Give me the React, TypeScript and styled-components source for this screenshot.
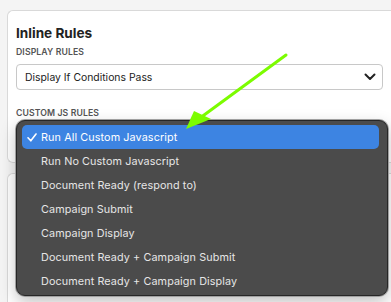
import React from "react";
import styled, { createGlobalStyle } from "styled-components";

const Global = createGlobalStyle`
  html, body { margin: 0; padding: 0; }
  body {
    background: #f4f4f4;
    font-family: "Inter", "Liberation Sans", sans-serif;
    width: 391px;
    height: 302px;
    overflow: hidden;
  }
`;

const Page = styled.div`
  position: relative;
  width: 391px;
  height: 302px;
  overflow: hidden;
  padding: 10px 0 0 7px;
  box-sizing: border-box;
  display: flex;
  flex-direction: column;
  gap: 10px;
`;

const Card = styled.section<{ $tall?: boolean }>`
  background: #fff;
  border: 1px solid #d9d9d9;
  border-right: none;
  border-radius: 6px 0 0 6px;
  padding: 14px 0 0 8px;
  height: ${(p) => (p.$tall ? "200px" : "153px")};
  box-sizing: border-box;
  display: flex;
  flex-direction: column;
  flex-shrink: 0;
`;

const Title = styled.h2`
  margin: 0;
  font-size: 13.6px;
  font-weight: 700;
  color: #222;
  line-height: 16px;
`;

const Label = styled.div<{ $mt?: number }>`
  margin-top: ${(p) => p.$mt ?? 0}px;
  font-size: 8.7px;
  font-weight: 600;
  letter-spacing: 0.1px;
  color: #555;
  line-height: 11px;
  text-transform: uppercase;
`;

const Select = styled.div`
  margin-top: 6px;
  width: 367px;
  height: 26px;
  box-sizing: border-box;
  border: 1px solid #c8c8c8;
  border-radius: 4px;
  padding: 0 6px 0 8px;
  display: flex;
  align-items: center;
  justify-content: space-between;
  font-size: 10.4px;
  color: #222;
`;

const Menu = styled.ul`
  position: absolute;
  left: 16px;
  top: 120px;
  width: 372px;
  height: 176px;
  box-sizing: border-box;
  margin: 0;
  padding: 4px 8px 0 5px;
  list-style: none;
  background: #4b4b4b;
  border: 1px solid #262626;
  border-radius: 9px;
  box-shadow: 0 0 0 1px #a0a0a0, 0 6px 16px rgba(0, 0, 0, 0.25);
  font-family: "Inter", "Liberation Sans", sans-serif;
`;

const Item = styled.li<{ $active?: boolean }>`
  position: relative;
  height: 24px;
  display: flex;
  align-items: center;
  padding-left: 19px;
  border-radius: 5px;
  font-size: 10.8px;
  letter-spacing: 0.1px;
  color: ${(p) => (p.$active ? "#fff" : "#e6e6e6")};
  background: ${(p) => (p.$active ? "#3d84e2" : "transparent")};
`;

const Check = styled.svg`
  position: absolute;
  left: 5px;
  top: 8px;
`;

const Arrow = styled.svg`
  position: absolute;
  left: 0;
  top: 0;
  pointer-events: none;
`;

const items = [
  "Run All Custom Javascript",
  "Run No Custom Javascript",
  "Document Ready (respond to)",
  "Campaign Submit",
  "Campaign Display",
  "Document Ready + Campaign Submit",
  "Document Ready + Campaign Display",
];

export default function App() {
  return (
    <>
      <Global />
      <Page>
        <Card>
          <Title>Inline Rules</Title>
          <Label $mt={6}>Display Rules</Label>
          <Select>
            <span>Display If Conditions Pass</span>
            <svg width="12" height="8" viewBox="0 0 12 8">
              <path d="M1.5 1.5 L6 6 L10.5 1.5" fill="none" stroke="#222" strokeWidth="2" strokeLinecap="round" strokeLinejoin="round" />
            </svg>
          </Select>
          <Label $mt={18}>Custom JS Rules</Label>
        </Card>
        <Card $tall />
        <Menu>
          {items.map((t, i) => (
            <Item key={t} $active={i === 0}>
              {i === 0 && (
                <Check width="10" height="9" viewBox="0 0 10 9">
                  <path d="M1 4.8 L3.8 7.8 L9 1" fill="none" stroke="#fff" strokeWidth="1.6" strokeLinecap="round" strokeLinejoin="round" />
                </Check>
              )}
              {t}
            </Item>
          ))}
        </Menu>
        <Arrow width="391" height="302" viewBox="0 0 391 302">
          <line x1="286" y1="55" x2="200" y2="118" stroke="#7cfc00" strokeWidth="3" strokeLinecap="round" />
          <polygon points="186,129 194,111 211,119" fill="#7cfc00" />
        </Arrow>
      </Page>
    </>
  );
}
